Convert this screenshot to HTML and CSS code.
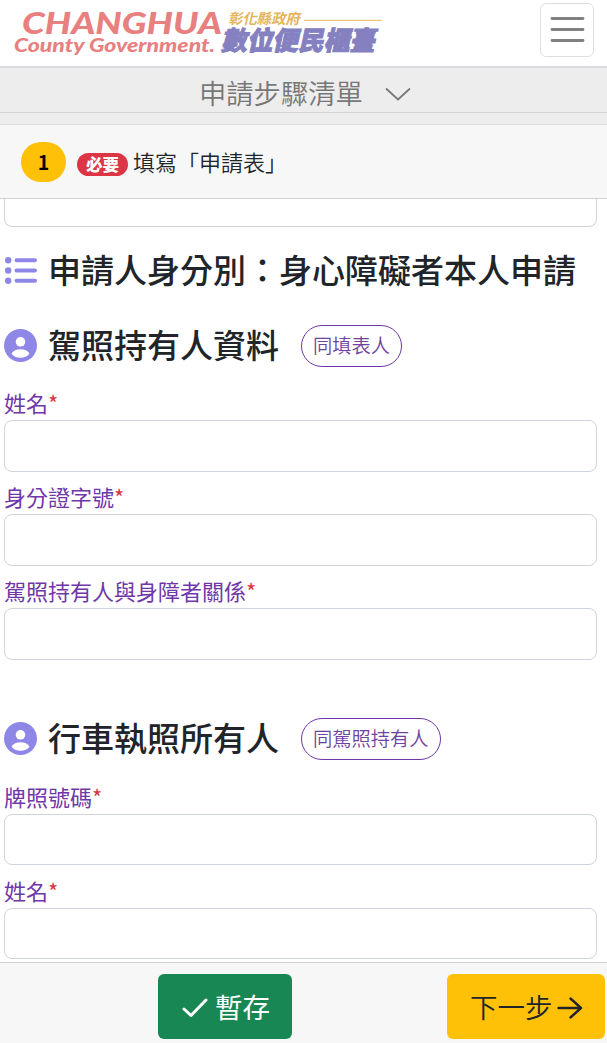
FILE: index.html
```html
<!DOCTYPE html>
<html lang="zh-Hant">
<head>
<meta charset="utf-8">
<meta name="viewport" content="width=device-width, initial-scale=1">
<title>彰化縣政府 數位便民櫃臺</title>
<link rel="stylesheet" href="styles.css">
</head>
<body>
<header class="topbar">
  <svg class="logo" width="375" height="56" viewBox="0 0 375 56" role="img">
    <g class="logo-en">
      <text x="8" y="34" font-size="31" textLength="200" lengthAdjust="spacingAndGlyphs">CHANGHUA</text>
      <text x="0" y="51.5" font-size="18.5" textLength="201" lengthAdjust="spacingAndGlyphs">County Government.</text>
    </g>
    <g class="logo-zh">
      <text class="logo-gov" transform="translate(214 24) skewX(-12)" font-size="14.5" textLength="72" lengthAdjust="spacingAndGlyphs">彰化縣政府</text>
      <path class="logo-rule" d="M290 20.3H368"/>
      <text class="logo-desk" transform="translate(207 50) skewX(-12)" font-size="26" textLength="154" lengthAdjust="spacingAndGlyphs">數位便民櫃臺</text>
    </g>
  </svg>
  <button class="menu" aria-label="選單"><svg width="40" height="40" viewBox="0 0 40 40"><path d="M5 9.500H36M5 20.500H36M5 31.500H36"/></svg></button>
</header>
<div class="steps-toggle">
  <span>申請步驟清單</span>
  <svg width="26" height="14" viewBox="0 0 26 14"><path d="M1 1.5L13 12.5L25 1.5"/></svg>
</div>
<div class="steps-gap"></div>
<div class="step">
  <span class="step-no">1</span>
  <span class="badge">必要</span>
  <span class="step-name">填寫「申請表」</span>
</div>
<main class="form">
  <div class="input input-cut"></div>
  <h2 class="heading heading-first">
    <svg class="icon" width="33" height="33" viewBox="0 0 33 33"><circle cx="4.2" cy="6.2" r="3.2"/><circle cx="4.2" cy="16.5" r="3.2"/><circle cx="4.2" cy="26.8" r="3.2"/><path class="bars" d="M16.500 6.200H35M16.500 16.500H35M16.500 26.800H35" transform="translate(-4 0)"/></svg>
    <span>申請人身分別：身心障礙者本人申請</span>
  </h2>
  <h2 class="heading heading-person">
    <svg class="icon" width="33" height="33" viewBox="0 0 33 33"><circle cx="16.5" cy="16.5" r="16.5"/><circle class="hole" cx="16.5" cy="12.8" r="4.8"/><path class="hole" d="M7.500 24.500C9 21.700 12.500 20.200 16.500 20.200S24 21.700 25.500 24.500C23.500 27.500 20.500 28.700 16.500 28.700S9.500 27.500 7.500 24.500Z"/></svg>
    <span>駕照持有人資料</span>
    <button class="same">同填表人</button>
  </h2>
  <label class="label label-lead">姓名<span class="req">*</span></label>
  <div class="input"></div>
  <label class="label">身分證字號<span class="req">*</span></label>
  <div class="input"></div>
  <label class="label">駕照持有人與身障者關係<span class="req">*</span></label>
  <div class="input"></div>
  <h2 class="heading heading-owner">
    <svg class="icon" width="33" height="33" viewBox="0 0 33 33"><circle cx="16.5" cy="16.5" r="16.5"/><circle class="hole" cx="16.5" cy="12.8" r="4.8"/><path class="hole" d="M7.500 24.500C9 21.700 12.500 20.200 16.500 20.200S24 21.700 25.500 24.500C23.500 27.500 20.500 28.700 16.500 28.700S9.500 27.500 7.500 24.500Z"/></svg>
    <span>行車執照所有人</span>
    <button class="same">同駕照持有人</button>
  </h2>
  <label class="label label-lead">牌照號碼<span class="req">*</span></label>
  <div class="input input-owner"></div>
  <label class="label">姓名<span class="req">*</span></label>
  <div class="input input-owner"></div>
</main>
<footer class="actions">
  <button class="btn save"><svg width="26" height="22" viewBox="0 0 26 22"><path d="M2 12L9 18.500L24 3"/></svg><span>暫存</span></button>
  <button class="btn next"><span>下一步</span><svg width="26" height="22" viewBox="0 0 26 22"><path d="M1.500 11H24M13.500 1.500L24 11L13.500 20.500"/></svg></button>
</footer>
</body>
</html>
```
FILE: styles.css
```css
* { box-sizing: border-box; }
body {
  margin: 0;
  height: 1043px;
  display: flex;
  flex-direction: column;
  overflow: hidden;
  background: #fff;
  color: #212529;
  font-family: "Noto Sans CJK TC", sans-serif;
}
button { font-family: inherit; padding: 0; margin: 0; }
svg { display: block; flex: none; }

.topbar {
  height: 68px;
  flex: none;
  display: flex;
  justify-content: space-between;
  align-items: flex-start;
  padding: 3px 13px 0 14px;
  border-bottom: 2px solid #dadadf;
}
.logo { margin-top: -3px; overflow: visible; }
.logo-en { fill: #e98080; font-family: "Lato", sans-serif; font-style: italic; font-weight: 900; }
.logo-zh { font-weight: 900; }
.logo-gov { fill: #e6b45c; font-weight: 700; }
.logo-rule { stroke: #ecc579; stroke-width: 1.2; }
.logo-desk { fill: #8580c0; stroke: #8580c0; stroke-width: 1; }
.menu {
  width: 54px;
  height: 54px;
  display: flex;
  align-items: center;
  justify-content: center;
  background: #fff;
  border: 1px solid #dfdfdf;
  border-radius: 6px;
}
.menu svg { fill: none; stroke: #808080; stroke-width: 2.8; stroke-linecap: round; margin-top: -2px; }

.steps-toggle {
  height: 45px;
  flex: none;
  display: flex;
  align-items: center;
  gap: 22px;
  padding-left: 199px;
  background: #ededed;
  border-bottom: 1px solid #d2d2d2;
  color: #777;
  font-size: 27.3px;
  font-weight: 350;
  line-height: 44px;
}
.steps-toggle svg { fill: none; stroke: #777; stroke-width: 1.7; margin-top: 8px; }
.steps-toggle span { margin-top: 4px; }
.steps-gap { height: 12px; flex: none; background: #ededed; border-bottom: 1px solid #dcdcdc; }

.step {
  height: 74px;
  flex: none;
  display: flex;
  align-items: center;
  padding-left: 21px;
  background: #f7f7f7;
  border-bottom: 1px solid #d2d2d2;
}
.step-no {
  width: 45px;
  height: 40px;
  line-height: 40px;
  border-radius: 20px;
  background: #ffc107;
  color: #000;
  text-align: center;
  font-size: 19.5px;
  font-weight: 700;
}
.badge {
  width: 51px;
  height: 23px;
  margin: 5px 5px 0 11px;
  line-height: 22px;
  border-radius: 12px;
  background: #dc3545;
  color: #fff;
  text-align: center;
  font-size: 16.5px;
  font-weight: 900;
}
.step-name { font-size: 22px; font-weight: 350; margin-top: -1px; }

.form { flex: 1; min-height: 0; overflow: hidden; padding: 0 10px 0 4px; }
.input { height: 52px; border: 1px solid #ced4da; border-radius: 8px; background: #fff; }
.input-cut { height: 28px; border-top: 0; border-radius: 0 0 8px 8px; }
.input-owner { height: 51px; }
.input-owner + .label { margin-top: 11px; }
.heading {
  display: flex;
  align-items: center;
  height: 48px;
  margin: 0;
  font-size: 33px;
  font-weight: 500;
  line-height: 44px;
  white-space: nowrap;
}
.heading span { margin-top: -3px; }
.heading-first { margin-top: 19px; }
.heading-person { margin-top: 27px; }
.heading-owner { margin-top: 54px; }
.heading-owner + .label { margin-top: 20px; }
.icon { margin-right: 11px; fill: #8f87e8; }
.hole { fill: #fff; }
.bars { stroke: #8f87e8; stroke-width: 4; stroke-linecap: round; }
.same {
  height: 42px;
  margin: 1px 0 0 22px;
  padding: 0 11px 1px;
  border: 1px solid #6f37a8;
  border-radius: 21px;
  background: #fff;
  color: #6f42a1;
  font-size: 19.25px;
  font-weight: 350;
}
.label {
  display: block;
  height: 32px;
  margin-top: 10px;
  color: #6f37a8;
  font-size: 22px;
  line-height: 29px;
}
.label-lead { margin-top: 19px; }
.req { color: #dc3545; }

.actions {
  height: 81px;
  flex: none;
  display: flex;
  align-items: flex-start;
  justify-content: space-between;
  padding: 11px 2px 0 158px;
  background: #f7f7f7;
  border-top: 1px solid #d2d2d2;
}
.btn {
  height: 65px;
  display: flex;
  align-items: center;
  border: 0;
  border-radius: 6px;
  font-size: 27.5px;
}
.btn span { margin-top: -2px; }
.btn svg { fill: none; stroke: currentColor; stroke-linecap: round; stroke-linejoin: round; margin-top: 2px; }
.save { width: 134px; gap: 7px; padding-left: 24px; background: #198754; color: #fff; }
.save svg { stroke-width: 3; }
.next { width: 158px; gap: 4px; padding-left: 23px; background: #ffc107; color: #212529; font-weight: 350; }
.next svg { stroke-width: 2.400; }
```
